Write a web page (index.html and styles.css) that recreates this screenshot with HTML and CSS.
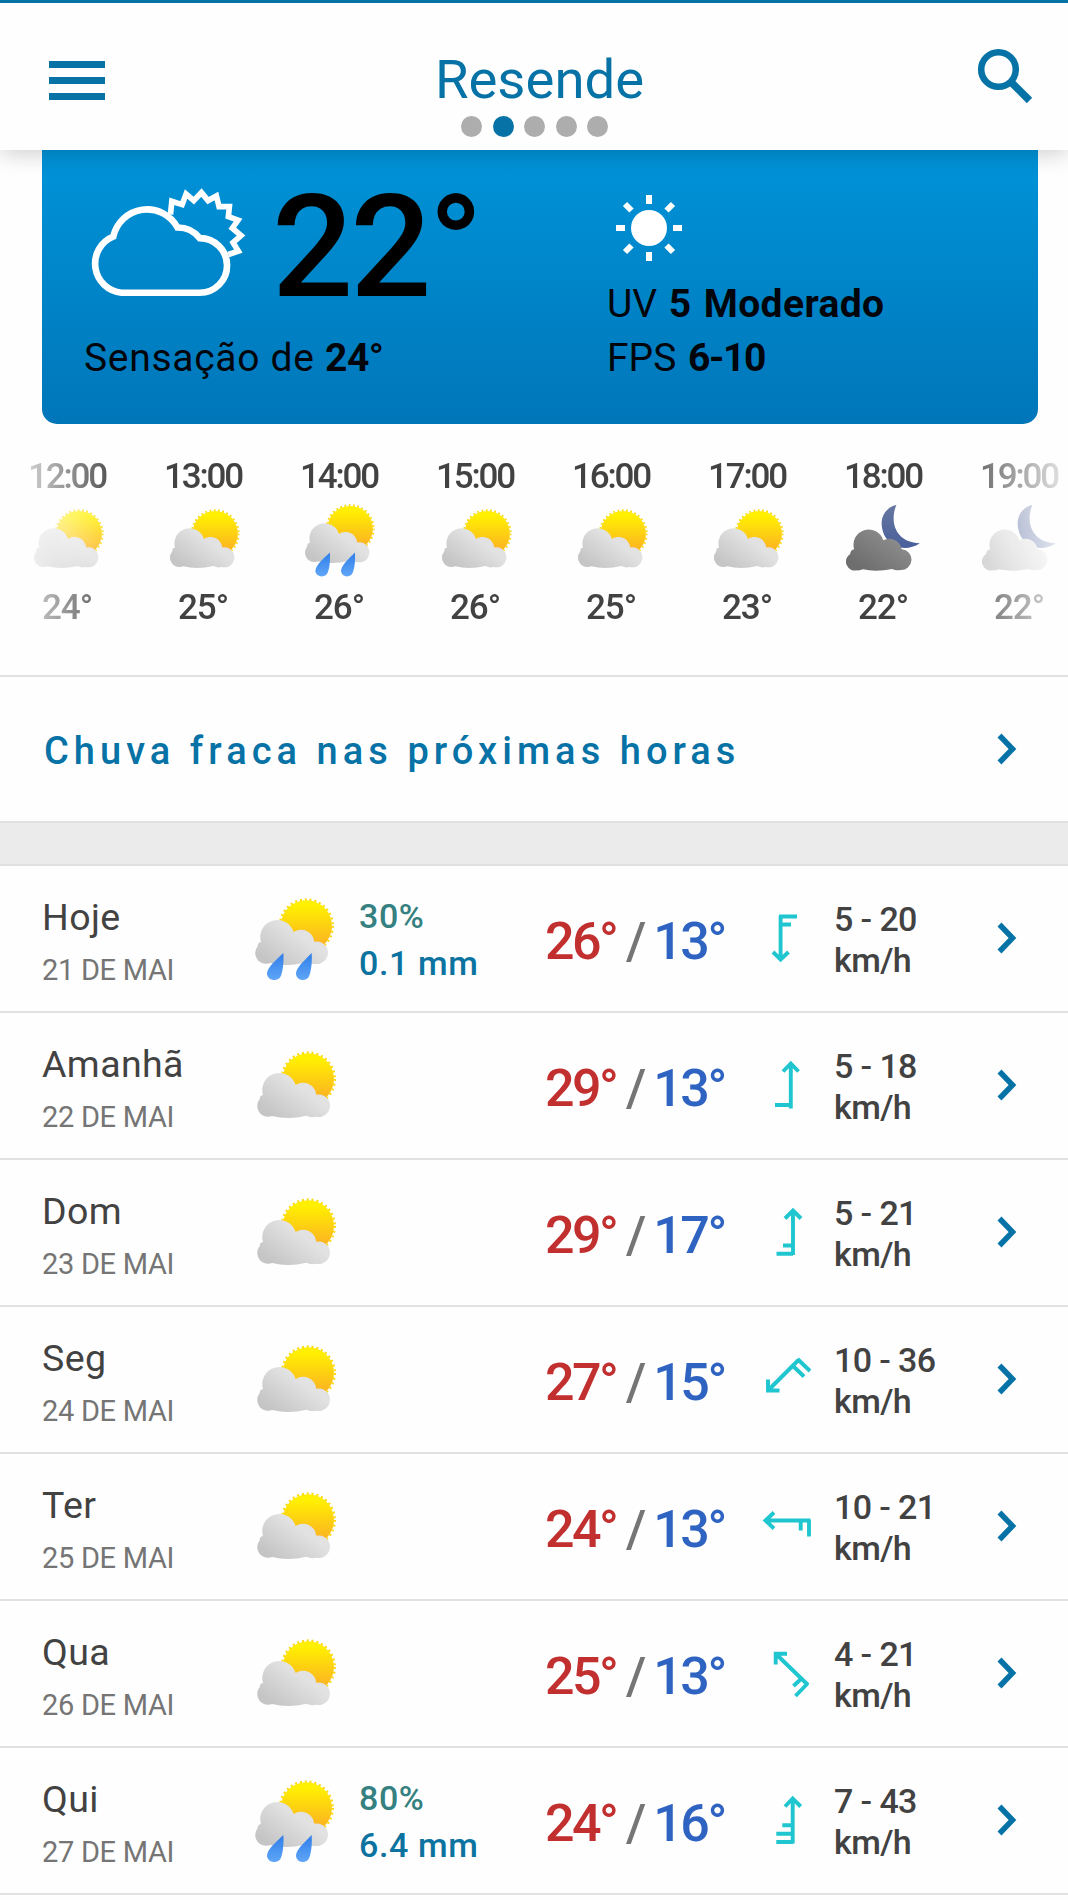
FILE: index.html
```
<!DOCTYPE html>
<html lang="pt">
<head>
<meta http-equiv="Content-Type" content="text/html; charset=utf-8"/>

<title>Resende</title>

<link rel="stylesheet" href="styles.css">

</head>

<body>

<svg class="defs" width="0" height="0">
  <defs>
    <linearGradient id="sunFill" x1="0" y1="0" x2="0" y2="1">
      <stop offset="0.1" stop-color="#fff000"/>
      <stop offset="0.9" stop-color="#fbb024"/>
    </linearGradient>
    <linearGradient id="cloudFill" gradientUnits="userSpaceOnUse" x1="90" y1="245" x2="160" y2="150">
      <stop offset="0" stop-color="#c5c5c5"/>
      <stop offset="1" stop-color="#e2e2e2"/>
    </linearGradient>
    <linearGradient id="dropFill" x1="0" y1="0" x2="0" y2="1">
      <stop offset="0" stop-color="#2f7de8"/>
      <stop offset="1" stop-color="#5fa6f8"/>
    </linearGradient>
    <linearGradient id="moonFill" x1="0" y1="0" x2="0" y2="1">
      <stop offset="0" stop-color="#66779f"/>
      <stop offset="1" stop-color="#4a5f9d"/>
    </linearGradient>
    <linearGradient id="darkFill" gradientUnits="userSpaceOnUse" x1="970" y1="390" x2="1040" y2="290">
      <stop offset="0" stop-color="#6e6e6e"/>
      <stop offset="1" stop-color="#8a8a8a"/>
    </linearGradient>
    <linearGradient id="lightFill" gradientUnits="userSpaceOnUse" x1="970" y1="390" x2="1040" y2="290">
      <stop offset="0" stop-color="#c8c8c8"/>
      <stop offset="1" stop-color="#e0e0e0"/>
    </linearGradient>

    <g id="sunCloud">
      <circle cx="200" cy="137" r="77" fill="url(#sunFill)"/>
      <circle cx="200" cy="137" r="79.5" fill="none" stroke="#fcd80c" stroke-width="7" stroke-dasharray="5.7 9"/>
      <path fill="url(#cloudFill)" d="M76 250 A32 32 0 0 1 54 198 Q54 186 64 185 A50 50 0 0 1 162 155 A40 40 0 0 1 224 184 A34 34 0 1 1 222 250 Q209 254 194 247 Q140 260 92 248 Q84 251 76 250 Z"/>
    </g>

    <symbol id="partly" viewBox="40 50 250 255">
      <use href="#sunCloud"/>
    </symbol>

    <symbol id="rain" viewBox="40 50 250 255">
      <use href="#sunCloud"/>
      <path fill="url(#dropFill)" d="M131 218 C133 245 130 270 124 286 C116 306 84 302 82 281 C82 262 108 240 131 218 Z"/>
      <path fill="url(#dropFill)" d="M216 218 C218 245 215 270 209 286 C201 306 171 302 169 281 C169 262 195 240 216 218 Z"/>
    </symbol>

    <g id="moon">
      <path fill="url(#moonFill)" d="M1062 195 C1040 250 1062 308 1132 310 C1080 345 1018 312 1018 250 C1018 225 1035 202 1062 195 Z"/>
    </g>
    <path id="nightCloud" d="M945 391 A27 27 0 0 1 924 342 Q925 330 936 328 A45 45 0 0 1 1023 301 A38 38 0 0 1 1078 328 A31 31 0 1 1 1074 390 Q1060 393 1050 387 Q1000 397 962 388 Q953 392 945 391 Z"/>

    <symbol id="chevron" viewBox="0 0 20 32">
      <path d="M2.5 2.5 L15.5 16 L2.5 29.5" fill="none" stroke="#0672a6" stroke-width="5.5"/>
    </symbol>
  </defs>
</svg>

<div class="header">
  <div class="menu"><span></span><span></span><span></span></div>
  <div class="place">
    <div class="title">Resende</div>
    <div class="dots"><i></i><i class="on"></i><i></i><i></i><i></i></div>
  </div>
  <svg class="search" width="58" height="58" viewBox="0 0 58 58">
    <circle cx="22.5" cy="21.5" r="17.3" fill="none" stroke="#0672a6" stroke-width="6.6"/>
    <path d="M35 34 L53.5 52.5" stroke="#0672a6" stroke-width="7.5"/>
  </svg>
</div>

<div class="card">
  <div class="now">
    <div class="now-top">
      <svg width="158" height="112" viewBox="180 140 475 335">
        <g fill="none" stroke="#fff">
          <path stroke-width="20" d="M275 457 H510 A82 82 0 0 0 510 293 A85 85 0 0 0 443 261 A104 104 0 0 0 250 288 A88 88 0 0 0 275 457 Z"/>
          <path stroke-width="17" d="M422 222 L426 182 L457 192 L469 160 L492 180 L515 156 L535 180 L560 166 L568 198 L599 198 L596 228 L625 239 L608 263 L634 285 L610 306 L626 332 L596 342"/>
        </g>
      </svg>
      <div class="degrees">22°</div>
    </div>
    <div class="feels">Sensação de <b>24°</b></div>
  </div>
  <div class="uv">
    <svg width="66" height="66" viewBox="-33 -33 66 66">
      <circle r="18" fill="#fff"/>
      <path stroke="#fff" stroke-width="6" d="M0 -33 V-24 M0 24 V33 M-33 0 H-24 M24 0 H33 M-24 -24 L-17.5 -17.5 M24 -24 L17.5 -17.5 M-24 24 L-17.5 17.5 M24 24 L17.5 17.5"/>
    </svg>
    <div>UV <b>5 Moderado</b></div>
    <div class="fps">FPS <b>6-10</b></div>
  </div>
</div>

<div class="hours">
  <div class="hour"><span>12:00</span><svg class="ic"><use href="#partly"/></svg><span class="t">24°</span></div>
  <div class="hour"><span>13:00</span><svg class="ic"><use href="#partly"/></svg><span class="t">25°</span></div>
  <div class="hour"><span>14:00</span><svg class="ic wet"><use href="#rain"/></svg><span class="t">26°</span></div>
  <div class="hour"><span>15:00</span><svg class="ic"><use href="#partly"/></svg><span class="t">26°</span></div>
  <div class="hour"><span>16:00</span><svg class="ic"><use href="#partly"/></svg><span class="t">25°</span></div>
  <div class="hour"><span>17:00</span><svg class="ic"><use href="#partly"/></svg><span class="t">23°</span></div>
  <div class="hour"><span>18:00</span><svg class="ic night" viewBox="913 190 225 206"><use href="#moon"/><use href="#nightCloud" fill="url(#darkFill)"/></svg><span class="t">22°</span></div>
  <div class="hour"><span>19:00</span><svg class="ic night" viewBox="913 190 225 206"><use href="#moon" opacity="0.85"/><use href="#nightCloud" fill="url(#lightFill)"/></svg><span class="t">22°</span></div>
</div>

<div class="alert">
  <span>Chuva fraca nas próximas horas</span>
  <svg class="chev"><use href="#chevron"/></svg>
</div>

<div class="band"></div>

<div class="days">
  <div class="row">
    <div class="day">Hoje<small>21 DE MAI</small></div>
    <svg class="sky wet"><use href="#rain"/></svg>
    <div class="prec"><em>30%</em>0.1 mm</div>
    <div class="temps"><span class="max">26°</span><span class="sl">/</span><span class="min">13°</span></div>
    <svg class="wind" viewBox="763 913 50 50"><path d="M781.6 958 V916 M780 916.5 H798 M782 924.5 H792 M774 952 L781.6 959.5 L789.5 952"/></svg>
    <div class="speed">5 - 20<br>km/h</div>
    <svg class="chev"><use href="#chevron"/></svg>
  </div>
  <div class="row">
    <div class="day">Amanhã<small>22 DE MAI</small></div>
    <svg class="sky"><use href="#partly"/></svg>
    <div class="prec"></div>
    <div class="temps"><span class="max">29°</span><span class="sl">/</span><span class="min">13°</span></div>
    <svg class="wind" viewBox="762 1060 50 50"><path d="M790.8 1064 V1108.5 M775 1105 H792 M783 1071.5 L790.8 1063.5 L798.5 1071.5"/></svg>
    <div class="speed">5 - 18<br>km/h</div>
    <svg class="chev"><use href="#chevron"/></svg>
  </div>
  <div class="row">
    <div class="day">Dom<small>23 DE MAI</small></div>
    <svg class="sky"><use href="#partly"/></svg>
    <div class="prec"></div>
    <div class="temps"><span class="max">29°</span><span class="sl">/</span><span class="min">17°</span></div>
    <svg class="wind" viewBox="762 1207 50 50"><path d="M793 1211 V1255 M776.5 1253.7 H793 M783 1245.5 H793 M785 1218.5 L793 1210.5 L801 1218.5"/></svg>
    <div class="speed">5 - 21<br>km/h</div>
    <svg class="chev"><use href="#chevron"/></svg>
  </div>
  <div class="row">
    <div class="day">Seg<small>24 DE MAI</small></div>
    <svg class="sky"><use href="#partly"/></svg>
    <div class="prec"></div>
    <div class="temps"><span class="max">27°</span><span class="sl">/</span><span class="min">15°</span></div>
    <svg class="wind" viewBox="762 1354 50 50"><path d="M768.5 1390 L798.5 1360 M797.5 1359 L810 1371 M793 1366 L804 1376.5 M768 1379.5 V1390.5 H779.5"/></svg>
    <div class="speed">10 - 36<br>km/h</div>
    <svg class="chev"><use href="#chevron"/></svg>
  </div>
  <div class="row">
    <div class="day">Ter<small>25 DE MAI</small></div>
    <svg class="sky"><use href="#partly"/></svg>
    <div class="prec"></div>
    <div class="temps"><span class="max">24°</span><span class="sl">/</span><span class="min">13°</span></div>
    <svg class="wind" viewBox="762 1501 50 50"><path d="M766 1520.5 H810.5 M809 1520 V1536.5 M800.7 1520 V1530.5 M774 1512.5 L765.5 1520.5 L774 1528.5"/></svg>
    <div class="speed">10 - 21<br>km/h</div>
    <svg class="chev"><use href="#chevron"/></svg>
  </div>
  <div class="row">
    <div class="day">Qua<small>26 DE MAI</small></div>
    <svg class="sky"><use href="#partly"/></svg>
    <div class="prec"></div>
    <div class="temps"><span class="max">25°</span><span class="sl">/</span><span class="min">13°</span></div>
    <svg class="wind" viewBox="762 1648 50 50"><path d="M776 1654 L808 1685 M807.5 1683.5 L795.5 1696 M801.5 1678.5 L793.5 1686 M775.7 1664.5 V1653.8 H787"/></svg>
    <div class="speed">4 - 21<br>km/h</div>
    <svg class="chev"><use href="#chevron"/></svg>
  </div>
  <div class="row">
    <div class="day">Qui<small>27 DE MAI</small></div>
    <svg class="sky wet"><use href="#rain"/></svg>
    <div class="prec"><em>80%</em>6.4 mm</div>
    <div class="temps"><span class="max">24°</span><span class="sl">/</span><span class="min">16°</span></div>
    <svg class="wind" viewBox="762 1795 50 50"><path d="M792.7 1799 V1843.5 M776.3 1842 H793 M776.3 1833.7 H793 M782.3 1825.3 H793 M785 1806.5 L792.7 1798.5 L800.7 1806.5"/></svg>
    <div class="speed">7 - 43<br>km/h</div>
    <svg class="chev"><use href="#chevron"/></svg>
  </div>
</div>

</body>

</html>
```
FILE: styles.css
```
body {
   font-family: Roboto, "Liberation Sans", sans-serif;
   background-color: #fefefe;
   color: #424242;
   margin: 0;
   width: 1068px;
   height: 1900px;
   overflow: hidden;
}

svg {
   display: block;
   flex: none;
}

.defs {
   position: absolute;
}

/* header */
.header {
   position: relative;
   z-index: 1;
   display: flex;
   justify-content: space-between;
   align-items: flex-start;
   box-sizing: border-box;
   height: 150px;
   padding: 45px 34px 0 49px;
   border-top: 3px solid #0573a6;
   background-color: #fefefe;
   box-shadow: 0 3px 22px rgba(0, 0, 0, 0.2);
}

.menu {
   display: flex;
   flex-direction: column;
   gap: 9.5px;
   width: 56px;
   margin-top: 13px;
}

.menu span {
   height: 6.5px;
   background-color: #0672a6;
}

.place {
   margin: 0 7px 0 -7px;
}

.title {
   height: 64px;
   margin-left: 12px;
   line-height: 62px;
   font-size: 54.5px;
   color: #0672a6;
}

.dots {
   display: flex;
   justify-content: center;
   gap: 10.5px;
   margin: 4px 0 0 2px;
}

.dots i {
   width: 21px;
   height: 21px;
   border-radius: 50%;
   background-color: #adadad;
}

.dots .on {
   background-color: #0672a6;
}

/* current weather */
.card {
   display: flex;
   box-sizing: border-box;
   width: 996px;
   height: 274px;
   margin-left: 42px;
   border-radius: 0 0 15px 15px;
   background: linear-gradient(#0093d8, #0076b9);
   color: #02060c;
   font-size: 39px;
}

.card b {
   font-weight: 700;
}

.now {
   width: 565px;
   padding: 37px 0 0 48px;
   box-sizing: border-box;
}

.now-top {
   display: flex;
   height: 148px;
}

.degrees {
   margin: 5px 0 0 24px;
   line-height: 110px;
   font-size: 143px;
   font-weight: 500;
   letter-spacing: -3px;
   color: #000;
}

.feels {
   margin-left: -6px;
   line-height: 46px;
   letter-spacing: 0.7px;
}

.feels b {
   letter-spacing: -0.5px;
}

.uv {
   padding-top: 45px;
   line-height: 54px;
   word-spacing: 2px;
}

.uv b {
   letter-spacing: 0.4px;
}

.uv .fps b {
   letter-spacing: -1.4px;
}

.uv svg {
   margin: 0 0 16px 9px;
}

/* hourly strip */
.hours {
   display: flex;
   height: 221px;
   padding-top: 30px;
   overflow: hidden;
   border-bottom: 2px solid #e1e1e1;
   -webkit-mask-image: linear-gradient(#000, #000), linear-gradient(to right, transparent, #000 120px, #000 948px, rgba(0, 0, 0, 0.1));
   -webkit-mask-size: 100% 2px, 100% 100%;
   -webkit-mask-position: bottom, top;
   -webkit-mask-repeat: no-repeat;
}

.hour {
   flex: none;
   width: 136px;
   text-align: center;
   line-height: 45px;
   font-size: 35px;
   font-weight: 500;
   letter-spacing: -2.2px;
}

.hour span {
   display: block;
   height: 44px;
   padding-right: 2px;
}

.hour .t {
   letter-spacing: -1px;
}

.ic {
   width: 73.7px;
   height: 75.2px;
   margin: 10px 0 1.8px 32px;
}

.ic.wet {
   margin: 5px 0 6.8px 31px;
}

.ic.night {
   width: 76.3px;
   height: 69px;
   margin: 5px 0 13px 29.5px;
}

/* rain alert */
.alert {
   display: flex;
   justify-content: space-between;
   align-items: center;
   height: 144px;
   padding: 0 51px 0 44px;
   font-size: 38px;
   font-weight: 500;
   letter-spacing: 5.05px;
   color: #0672a6;
}

.alert span {
   padding-top: 3px;
}

.chev {
   width: 20px;
   height: 32px;
}

.band {
   box-sizing: border-box;
   height: 45px;
   border-top: 2px solid #e0e0e0;
   border-bottom: 2px solid #e0e0e0;
   background-color: #ebebeb;
}

/* days */
.row {
   display: grid;
   grid-template-columns: 211px 106px 186px 217px 72px 163px 20px;
   align-items: start;
   box-sizing: border-box;
   height: 147px;
   padding-left: 42px;
   border-bottom: 2px solid #e1e1e1;
}

.day {
   padding-top: 29px;
   line-height: 44px;
   font-size: 37.5px;
   letter-spacing: 0.4px;
}

.day small {
   display: block;
   margin-top: 11px;
   line-height: 40px;
   font-size: 29px;
   letter-spacing: -0.3px;
   color: #757575;
}

.sky {
   width: 83.3px;
   height: 85px;
   margin: 36.5px 0 0 2px;
}

.sky.wet {
   margin: 30.5px 0 0 0;
}

.prec {
   padding-top: 27px;
   line-height: 47px;
   font-size: 34px;
   font-weight: 500;
   letter-spacing: 0.6px;
   color: #0c73a0;
}

.prec em {
   display: block;
   font-style: normal;
   color: #358080;
}

.temps {
   padding-top: 45.5px;
   line-height: 60px;
   font-size: 52px;
   font-weight: 500;
   letter-spacing: -2.5px;
   white-space: nowrap;
}

.max {
   color: #c22f2f;
}

.sl {
   margin: 0 9.5px 0 9.5px;
   color: #757575;
}

.min {
   color: #2f63c2;
}

.wind {
   width: 50px;
   height: 50px;
   margin-top: 47px;
   fill: none;
   stroke: #1fc6cf;
   stroke-width: 3.9;
}

.speed {
   padding-top: 32.5px;
   line-height: 41px;
   font-size: 34px;
   font-weight: 500;
   letter-spacing: -0.6px;
}

.row .chev {
   margin-top: 55.5px;
}
```
